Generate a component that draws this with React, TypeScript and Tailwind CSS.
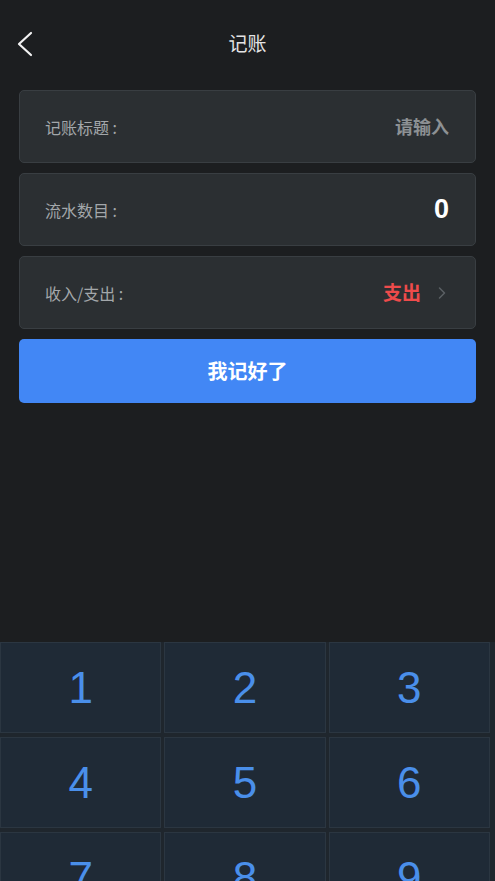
import { ChevronRight } from 'lucide-react'

const font = { fontFamily: '"Noto Sans CJK SC", "Noto Sans", sans-serif' }

const keys = ['1', '2', '3', '4', '5', '6', '7', '8', '9']

const Row = ({ label, children }: { label: string; children: React.ReactNode }) => (
  <div className="flex h-[73px] items-center justify-between rounded-[5px] border border-[#393e42] bg-[#2b2f32] pl-[25px] pr-[26px]">
    <span className="text-[16px] text-[#a3a7aa]">{label}</span>
    {children}
  </div>
)

export default function App() {
  return (
    <div className="flex h-[881px] w-[495px] flex-col overflow-hidden bg-[#1c1e20]" style={font}>
      <div className="relative flex h-[88px] items-center justify-center pb-[1px]">
        <button type="button" title="back" className="absolute left-[14px] top-[30px]">
          <svg width="24" height="28" viewBox="0 0 24 28" fill="none">
            <polyline points="17,3 5,14 17,25" stroke="#f2f2f2" strokeWidth="2.2" strokeLinecap="round" strokeLinejoin="round" />
          </svg>
        </button>
        <h1 className="text-[19px] text-[#e4e4e4]">记账</h1>
      </div>

      <div className="flex flex-col gap-[10px] px-[19px] pt-[2px]">
        <Row label="记账标题 :">
          <span className="text-[18px] font-bold text-[#8d9194]">请输入</span>
        </Row>
        <Row label="流水数目 :">
          <span
            className="text-[27px] font-bold text-white"
            style={{ fontFamily: '"Liberation Sans", sans-serif' }}
          >
            0
          </span>
        </Row>
        <div className="flex h-[73px] items-center justify-between rounded-[5px] border border-[#393e42] bg-[#2b2f32] pl-[25px] pr-[23px]">
          <span className="text-[16px] text-[#a3a7aa]">收入/支出 :</span>
          <div className="flex items-center gap-[11px]">
            <span className="text-[19px] font-bold text-[#ee4b4b]">支出</span>
            <ChevronRight className="h-[20px] w-[20px] text-[#5b6064]" strokeWidth={1.8} />
          </div>
        </div>
        <button
          type="button"
          className="h-[64px] w-full rounded-[5px] bg-[#4287f5] text-[20px] font-bold text-white"
        >
          我记好了
        </button>
      </div>

      <div className="flex-1" />

      <div className="grid h-[239px] grid-cols-3 gap-x-[3px] gap-y-[4px] bg-[#1f262d] pr-[5px]">
        {keys.map((k) => (
          <button
            key={k}
            type="button"
            className="flex h-[91px] items-center justify-center border border-[#2b3641] bg-[#1f2a36] text-[44px] text-[#4a8fea]"
            style={{ fontFamily: '"Liberation Sans", Arial, sans-serif' }}
          >
            {k}
          </button>
        ))}
      </div>
    </div>
  )
}
